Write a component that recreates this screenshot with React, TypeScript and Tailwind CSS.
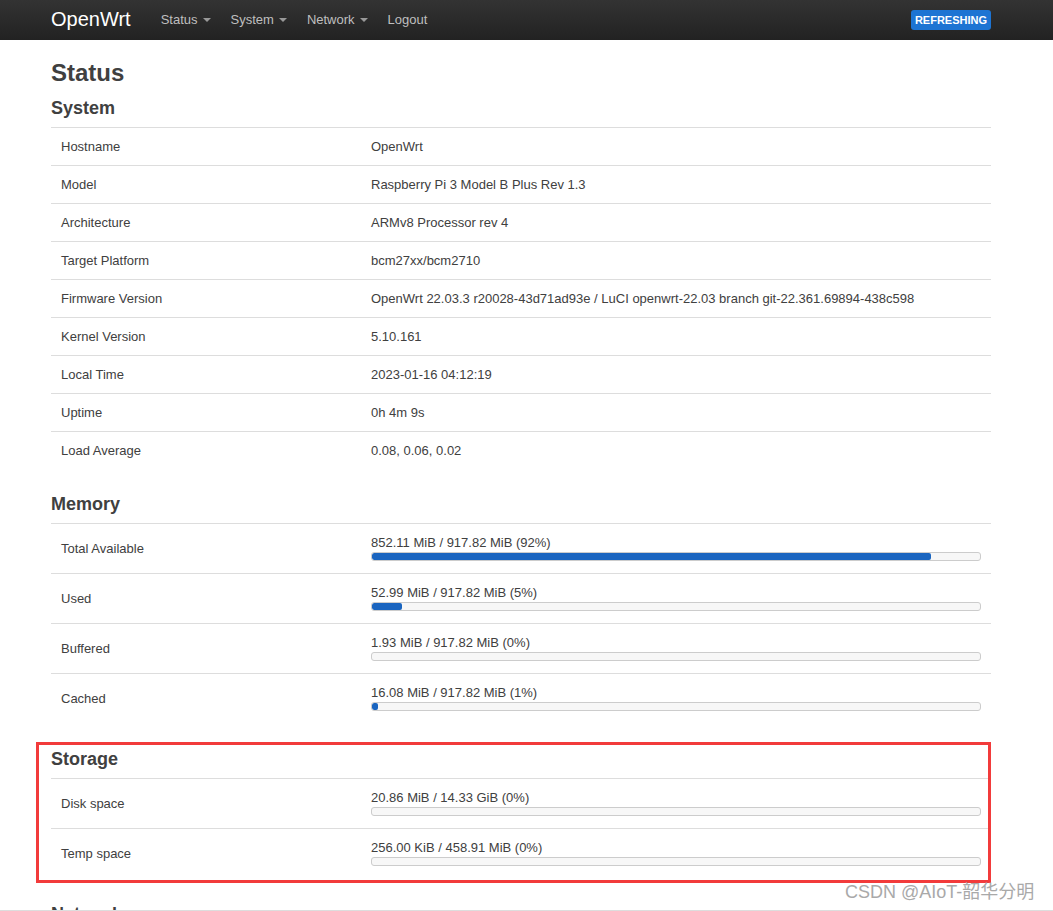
import React from "react";

const system: [string, string][] = [
  ["Hostname", "OpenWrt"],
  ["Model", "Raspberry Pi 3 Model B Plus Rev 1.3"],
  ["Architecture", "ARMv8 Processor rev 4"],
  ["Target Platform", "bcm27xx/bcm2710"],
  ["Firmware Version", "OpenWrt 22.03.3 r20028-43d71ad93e / LuCI openwrt-22.03 branch git-22.361.69894-438c598"],
  ["Kernel Version", "5.10.161"],
  ["Local Time", "2023-01-16 04:12:19"],
  ["Uptime", "0h 4m 9s"],
  ["Load Average", "0.08, 0.06, 0.02"],
];

const memory: [string, string, number][] = [
  ["Total Available", "852.11 MiB / 917.82 MiB (92%)", 92],
  ["Used", "52.99 MiB / 917.82 MiB (5%)", 5],
  ["Buffered", "1.93 MiB / 917.82 MiB (0%)", 0],
  ["Cached", "16.08 MiB / 917.82 MiB (1%)", 1],
];

const storage: [string, string, number][] = [
  ["Disk space", "20.86 MiB / 14.33 GiB (0%)", 0],
  ["Temp space", "256.00 KiB / 458.91 MiB (0%)", 0],
];

function Caret() {
  return (
    <span className="ml-[5px] inline-block w-0 h-0 border-l-[4px] border-r-[4px] border-t-[4px] border-l-transparent border-r-transparent border-t-[#999] align-middle" />
  );
}

function NavItem({ label, menu }: { label: string; menu?: boolean }) {
  return (
    <span className="px-[10px] text-[13px] text-[#bfbfbf] flex items-center">
      {label}
      {menu && <Caret />}
    </span>
  );
}

function Progress({ text, pct }: { text: string; pct: number }) {
  return (
    <div>
      <div className="leading-[18px]">{text}</div>
      <div className="h-[9px] mb-[2px] border border-[#ccc] bg-[#f7f7f7] rounded-[3px] overflow-hidden">
        <div className="h-full bg-[#1a65c0] rounded-[2px]" style={{ width: `${pct}%` }} />
      </div>
    </div>
  );
}

function Heading({ children }: { children: React.ReactNode }) {
  return <h3 className="text-[18px] leading-[20px] font-bold mb-[9px]">{children}</h3>;
}

function BarRow({ k, v, p }: { k: string; v: string; p: number }) {
  return (
    <div className="flex items-center border-t border-[#ddd]">
      <div className="w-[310px] shrink-0 px-[10px]">{k}</div>
      <div className="flex-1 p-[10px]">
        <Progress text={v} pct={p} />
      </div>
    </div>
  );
}

export default function App() {
  return (
    <div className="relative h-[911px] overflow-hidden bg-white text-[#404040] font-['Liberation_Sans',Arial,sans-serif] border-b border-[#ddd]">
      <header className="h-[40px] bg-gradient-to-b from-[#333] to-[#222]">
        <div className="ml-[51px] w-[940px] h-full flex items-center">
          <span className="text-[20px] text-white leading-none mr-[20px] -mt-[3px]">OpenWrt</span>
          <nav className="flex items-center -mt-[1px]">
            <NavItem label="Status" menu />
            <NavItem label="System" menu />
            <NavItem label="Network" menu />
            <NavItem label="Logout" />
          </nav>
          <span className="ml-auto bg-[#1d74d3] text-white font-bold text-[11px] leading-[20px] px-[4px] rounded-[3px]">
            REFRESHING
          </span>
        </div>
      </header>

      <main className="ml-[51px] w-[940px] text-[13px]">
        <h2 className="text-[24px] leading-[28px] font-bold mt-[19px] mb-[11px]">Status</h2>

        <Heading>System</Heading>
        <div>
          {system.map(([k, v]) => (
            <div key={k} className="flex border-t border-[#ddd] leading-[17px]">
              <div className="w-[310px] shrink-0 p-[10px]">{k}</div>
              <div className="flex-1 p-[10px]">{v}</div>
            </div>
          ))}
        </div>

        <div className="mt-[25px]">
          <Heading>Memory</Heading>
          {memory.map(([k, v, p]) => (
            <BarRow key={k} k={k} v={v} p={p} />
          ))}
        </div>

        <div className="relative mt-[26px]">
          <div className="absolute -left-[15px] -top-[7px] w-[955px] h-[141px] border-[3px] border-[#f23b3b] pointer-events-none" />
          <Heading>Storage</Heading>
          {storage.map(([k, v, p]) => (
            <BarRow key={k} k={k} v={v} p={p} />
          ))}
        </div>

        <div className="mt-[26px]">
          <Heading>Network</Heading>
        </div>
      </main>

      <span className="absolute left-[845px] top-[879px] text-[18px] text-[#a9a9a9] font-['Liberation_Sans','Noto_Sans_CJK_SC',sans-serif]">
        CSDN @AIoT-韶华分明
      </span>
    </div>
  );
}
